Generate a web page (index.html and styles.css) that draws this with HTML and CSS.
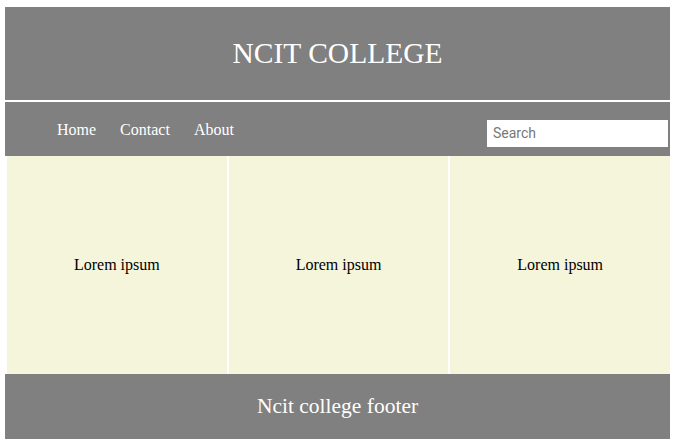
FILE: index.html
```html
<!DOCTYPE html>
<html>
<head>
<meta charset="utf-8">
<title>NCIT College</title>
<link rel="stylesheet" href="styles.css">
</head>
<body>
<div class="page">
  <header class="header">NCIT COLLEGE</header>
  <nav class="nav">
    <div class="links">
      <a href="#" class="link">Home</a>
      <a href="#" class="link">Contact</a>
      <a href="#" class="link">About</a>
    </div>
    <input class="search" type="text" placeholder="Search">
  </nav>
  <main class="content">
    <div class="col">Lorem ipsum</div>
    <div class="col">Lorem ipsum</div>
    <div class="col">Lorem ipsum</div>
  </main>
  <footer class="footer">Ncit college footer</footer>
</div>
</body>
</html>
```

FILE: styles.css
```css
* { box-sizing: border-box; }
html, body { margin: 0; padding: 0; background: #fff; }
body {
  padding: 7px 5px 0 5px;
  font-family: "Liberation Serif", "Times New Roman", serif;
}
.page {
  display: flex;
  flex-direction: column;
  width: 665px;
}
.header {
  height: 93px;
  background: #808080;
  color: #fff;
  font-size: 29.5px;
  display: flex;
  align-items: center;
  justify-content: center;
  padding-bottom: 1px;
}
.nav {
  margin-top: 2px;
  height: 54px;
  background: #808080;
  display: flex;
  align-items: center;
  justify-content: space-between;
  padding: 0 2px 0 52px;
}
.links {
  display: flex;
  gap: 24px;
  margin-top: 1px;
}
.link {
  color: #fff;
  text-decoration: none;
  font-size: 16px;
}
.search {
  width: 181px;
  height: 27px;
  border: none;
  outline: none;
  background: #fff;
  padding: 0 6px;
  font-family: Roboto, "Liberation Sans", sans-serif;
  font-size: 14px;
  color: #333;
  margin-top: 8px;
}
.search::placeholder { color: #777; }
.content {
  height: 218px;
  display: flex;
  gap: 2px;
  padding-left: 2px;
  background: #fff;
}
.col {
  flex: 1;
  background: #f5f5dc;
  display: flex;
  align-items: center;
  justify-content: center;
  font-size: 16px;
  color: #000;
}
.footer {
  height: 65px;
  background: #808080;
  color: #fff;
  font-size: 21.5px;
  display: flex;
  align-items: center;
  justify-content: center;
}
```
